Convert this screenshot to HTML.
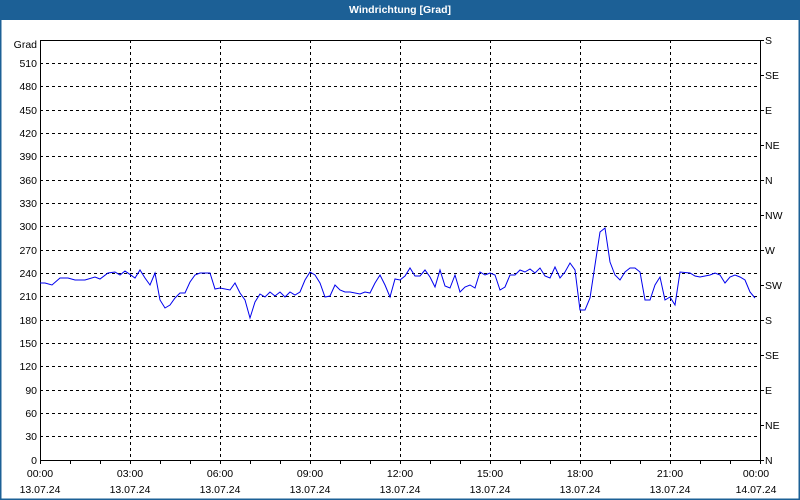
<!DOCTYPE html>
<html><head><meta charset="utf-8"><style>
html,body{margin:0;padding:0;width:800px;height:500px;overflow:hidden;background:#fff}
svg{display:block}
text{font-family:"Liberation Sans","DejaVu Sans",sans-serif;font-size:10.5px;fill:#000}
</style></head><body>
<svg width="800" height="500" viewBox="0 0 800 500">
<rect x="0" y="0" width="800" height="500" fill="#fff"/>
<rect x="0" y="0" width="800" height="20" fill="#1c6096"/>
<rect x="0" y="0" width="1.5" height="500" fill="#1c6096"/>
<rect x="798.5" y="0" width="1.5" height="500" fill="#1c6096"/>
<rect x="0" y="498.5" width="800" height="1.5" fill="#1c6096"/>
<text x="400" y="13" text-anchor="middle" style="fill:#fff;font-weight:bold;font-size:10.5px">Windrichtung [Grad]</text>
<g stroke="#000" stroke-width="1" stroke-dasharray="3,3" fill="none">
<path d="M40 63.5H760M40 86.5H760M40 110.5H760M40 133.5H760M40 156.5H760M40 180.5H760M40 203.5H760M40 226.5H760M40 250.5H760M40 273.5H760M40 296.5H760M40 320.5H760M40 343.5H760M40 366.5H760M40 390.5H760M40 413.5H760M40 436.5H760"/>
<path d="M130.5 40V460M220.5 40V460M310.5 40V460M400.5 40V460M490.5 40V460M580.5 40V460M670.5 40V460"/>
</g>
<rect x="40.5" y="40.5" width="720" height="420" fill="none" stroke="#000"/>
<g stroke="#000"><path d="M40.5 460v4M70.5 460v4M100.5 460v4M130.5 460v4M160.5 460v4M190.5 460v4M220.5 460v4M250.5 460v4M280.5 460v4M310.5 460v4M340.5 460v4M370.5 460v4M400.5 460v4M430.5 460v4M460.5 460v4M490.5 460v4M520.5 460v4M550.5 460v4M580.5 460v4M610.5 460v4M640.5 460v4M670.5 460v4M700.5 460v4M730.5 460v4M760.5 460v4"/>
<path d="M760 40.5h4M760 75.5h4M760 110.5h4M760 145.5h4M760 180.5h4M760 215.5h4M760 250.5h4M760 285.5h4M760 320.5h4M760 355.5h4M760 390.5h4M760 425.5h4M760 460.5h4"/></g>
<polyline fill="none" stroke="#0000ee" stroke-width="1" points="40,283 45,283 52,285 60,278 68,278 75,280 85,280 95,277 100,279 108,273 115,272 120,275 125,271 135,278 140,270 145,278 150,285 155,273 160,300 165,308 170,305 175,298 180,293 185,293 190,282 195,275 200,273 210,273 215,289 220,288 230,290 235,283 240,293 245,300 250,318 255,302 260,294 265,297 270,292 275,296 280,292 285,297 290,292 295,295 300,292 305,280 310,272 315,275 320,283 325,297 330,296 335,285 340,290 345,292 350,292 360,294 365,292 370,293 375,283 380,275 385,285 390,297 395,279 400,280 405,276 410,268 415,276 420,276 425,270 430,277 435,287 440,270 445,286 450,288 455,275 460,292 465,287 470,285 475,288 480,272 485,275 490,273 495,275 500,290 505,287 510,275 515,275 520,270 525,272 530,269 535,273 540,268 545,276 550,278 555,267 560,278 565,272 570,263 575,270 580,310 585,310 590,298 595,265 600,232 605,228 610,262 615,275 620,280 625,272 630,268 635,268 640,272 645,300 650,300 655,285 660,277 665,300 670,297 675,305 680,272 690,273 695,276 700,277 710,275 715,273 720,275 725,283 730,277 735,275 740,277 745,280 750,292 755,298"/>
<g text-anchor="end">
<text x="37" y="48">Grad</text>
<text x="37" y="67">510</text><text x="37" y="90">480</text><text x="37" y="114">450</text><text x="37" y="137">420</text><text x="37" y="160">390</text><text x="37" y="184">360</text><text x="37" y="207">330</text><text x="37" y="230">300</text><text x="37" y="254">270</text><text x="37" y="277">240</text><text x="37" y="300">210</text><text x="37" y="324">180</text><text x="37" y="347">150</text><text x="37" y="370">120</text><text x="37" y="394">90</text><text x="37" y="417">60</text><text x="37" y="440">30</text><text x="37" y="464">0</text>
</g>
<g>
<text x="765" y="44">S</text><text x="765" y="79">SE</text><text x="765" y="114">E</text><text x="765" y="149">NE</text><text x="765" y="184">N</text><text x="765" y="219">NW</text><text x="765" y="254">W</text><text x="765" y="289">SW</text><text x="765" y="324">S</text><text x="765" y="359">SE</text><text x="765" y="394">E</text><text x="765" y="429">NE</text><text x="765" y="464">N</text>
</g>
<g text-anchor="middle">
<text x="40" y="477">00:00</text><text x="130" y="477">03:00</text><text x="220" y="477">06:00</text><text x="310" y="477">09:00</text><text x="400" y="477">12:00</text><text x="490" y="477">15:00</text><text x="580" y="477">18:00</text><text x="670" y="477">21:00</text><text x="756" y="477">00:00</text>
<text x="40" y="493">13.07.24</text><text x="130" y="493">13.07.24</text><text x="220" y="493">13.07.24</text><text x="310" y="493">13.07.24</text><text x="400" y="493">13.07.24</text><text x="490" y="493">13.07.24</text><text x="580" y="493">13.07.24</text><text x="670" y="493">13.07.24</text><text x="756" y="493">14.07.24</text>
</g>
</svg>
</body></html>
